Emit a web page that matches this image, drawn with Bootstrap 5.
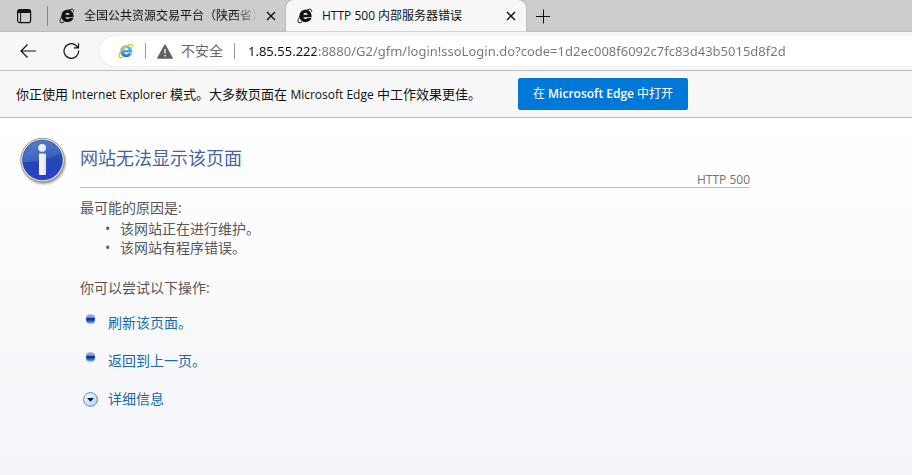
<!DOCTYPE html>
<html lang="zh-CN">
<head>
<meta charset="utf-8">
<meta name="viewport" content="width=device-width, initial-scale=1">
<title>HTTP 500 内部服务器错误</title>
<link href="https://cdn.jsdelivr.net/npm/bootstrap@5.3.0/dist/css/bootstrap.min.css" rel="stylesheet">
<style>
body { font-family: "Open Sans", "Noto Sans CJK SC", sans-serif; font-size: 14px; line-height: 20px; color: #575757; background: #fff; }
svg { display: block; flex: none; }
.icon-btn { border: 0; padding: 0; background: none; color: #111; }
.tab-strip { height: 32px; background: #cdcdcd; border-bottom: 1px solid #bcbcbc; font-size: 12px; line-height: 18px; color: #111; }
.strip-tool { padding: 0 15px 0 16px; }
.strip-line { width: 1px; height: 20px; background: #858585; }
.browser-tab { width: 238px; height: 32px; padding: 0 10px 0 11px; }
.browser-tab.current { width: 240px; background: #f7f7f7; border-radius: 8px 8px 0 0; box-shadow: 0 0 2px #999; clip-path: inset(0 -3px 0 -3px); }
.tab-title { flex: 1 1 0; min-width: 0; color: inherit; text-decoration: none; overflow: hidden; white-space: nowrap; margin-left: 9px; }
.tab-title.faded { -webkit-mask-image: linear-gradient(to left, transparent, #000 24px); mask-image: linear-gradient(to left, transparent, #000 24px); margin-right: 8px; }
.toolbar { height: 38px; background: #f7f7f7; padding-left: 20px; }
.reload { margin-left: 26px; }
.address { height: 30px; margin-left: 20px; padding-left: 18px; background: #fff; border-radius: 15px 0 0 15px; box-shadow: 0 0 3px #e2e2e2; }
.sep { width: 1px; height: 16px; margin: 0 11px; background: #999; }
.insecure { color: #666; gap: 8px; }
.url { border: 0; outline: 0; padding: 0; margin-left: 2px; font-family: "Noto Sans", sans-serif; font-size: 13px; height: 24px; color: #767676; -webkit-text-fill-color: transparent; background: linear-gradient(to right, #111 68px, #767676 68px); -webkit-background-clip: text; background-clip: text; }
.notice { height: 48px; background: #f7f7f7; border-top: 1px solid #bdbdbd; border-bottom: 1px solid #bdbdbd; padding-left: 16px; font-size: 13px; color: #111; }
.notice-text { flex: 0 0 502px; }
.latin { font-size: 12px; }
.edge-btn { --bs-btn-bg: #0078d7; --bs-btn-border-color: #0078d7; --bs-btn-font-size: 12px; --bs-btn-line-height: 18px; --bs-btn-border-radius: 2px; width: 170px; height: 32px; padding: 0; }
.error-page { flex: 1 1 auto; padding: 19px 20px 20px 18px; background: linear-gradient(#fff, #f4f5f9); }
.error-body { flex: 0 1 670px; margin-left: 12px; }
.error-head { border-bottom: 1px solid #b6bccc; }
.error-title { font-size: 18px; line-height: 26px; color: #4465a2; padding: 8px 0 2px; }
.error-code { font-size: 12px; line-height: 14px; color: #737373; text-align: right; }
.cause { padding-top: 10px; }
.reasons { padding-left: 25px; line-height: 19px; margin: 1px 0 21px; }
.reasons li::before { content: "•"; display: inline-block; width: 15px; }
.hint { margin-bottom: 15px; }
.action { color: #136ba9; text-decoration: none; font-size: 14px; line-height: 20px; gap: 10px; }
.actions { gap: 18px; padding-left: 3px; }
</style>
</head>
<body class="d-flex flex-column min-vh-100">
<svg width="0" height="0" class="position-absolute" aria-hidden="true">
  <defs>
    <symbol id="ie" viewBox="0 0 16 16">
      <path d="M8.600 1.800c3.500 0 6 2.500 6 6.300v1.100H6.400c.2 1.100 1 1.700 2.200 1.700.9 0 1.500-.3 1.900-.9h3.900c-.8 2.500-3 4.100-5.800 4.100-3.700 0-6.200-2.500-6.200-6.100s2.500-6.200 6.200-6.200zM6.400 6.700h4.200c-.1-1.200-.9-1.900-2.100-1.900s-2 .7-2.100 1.900z" fill="currentColor" fill-rule="evenodd"/>
      <path d="M14.500 3.800C15 2.200 14.500 1.300 13.200 1.200 10.800 1.100 6 4.200 3.300 8 .9 11.200.3 14.200 2 14.700c.8.2 1.900-.1 3.100-.8" fill="none" stroke="currentColor" stroke-width="1"/>
    </symbol>
    <symbol id="cross" viewBox="0 0 10 10"><path d="M1 1l8 8M9 1L1 9" stroke="currentColor" stroke-width="1.400"/></symbol>
    <linearGradient id="ieBlue" x1="0" y1="0" x2="0" y2="1"><stop stop-color="#6fd0f5"/><stop offset="1" stop-color="#1778c4"/></linearGradient>
    <linearGradient id="infoBlue" x1="0" y1="0" x2="0" y2="1"><stop stop-color="#3561bd"/><stop offset=".55" stop-color="#2347b4"/><stop offset="1" stop-color="#2a40c8"/></linearGradient>
    <linearGradient id="gloss" x1="0" y1="0" x2="1" y2="1"><stop stop-color="#7396d8" stop-opacity=".6"/><stop offset="1" stop-color="#5e82d4" stop-opacity=".25"/></linearGradient>
    <linearGradient id="stem" x1="0" y1="0" x2="1" y2="0"><stop stop-color="#fff"/><stop offset="1" stop-color="#dde1ee"/></linearGradient>
    <linearGradient id="bead" x1="0" y1="0" x2="0" y2="1"><stop stop-color="#a8b2dc"/><stop offset=".38" stop-color="#7286cb"/><stop offset=".45" stop-color="#0a2197"/><stop offset=".62" stop-color="#1740b8"/><stop offset="1" stop-color="#55c4f5"/></linearGradient>
    <linearGradient id="pane" x1="0" y1="0" x2="1" y2="1"><stop stop-color="#fff"/><stop offset="1" stop-color="#9fd0f0"/></linearGradient>
    <filter id="soft" x="-20%" y="-20%" width="140%" height="140%"><feGaussianBlur stdDeviation="1"/></filter>
    <symbol id="beadIcon" viewBox="0 0 15 10"><rect x="3" y=".5" width="9" height="9" rx="3.600" fill="url(#bead)" stroke="#a6b0d4" stroke-width=".6"/></symbol>
  </defs>
</svg>

<header>
  <div class="tab-strip d-flex align-items-center">
    <button class="icon-btn strip-tool" aria-label="标签页操作">
      <svg width="16" height="16" viewBox="0 0 16 16"><rect x="1.600" y="1.600" width="13" height="13" rx="2.200" fill="none" stroke="currentColor" stroke-width="1.200"/><path d="M1.500 5V3.500a2 2 0 0 1 2-2h9.200a2 2 0 0 1 2 2V5z" fill="currentColor"/><path d="M4.600 5v9.500" stroke="currentColor" stroke-width="1"/></svg>
    </button>
    <span class="strip-line"></span>
    <div class="browser-tab d-flex align-items-center">
      <svg width="16" height="16"><use href="#ie"/></svg>
      <a class="tab-title faded" href="#">全国公共资源交易平台（陕西省）</a>
      <button class="icon-btn" aria-label="关闭标签页"><svg width="10" height="10"><use href="#cross"/></svg></button>
    </div>
    <div class="browser-tab current d-flex align-items-center">
      <svg width="16" height="16"><use href="#ie"/></svg>
      <a class="tab-title" href="#" aria-current="page">HTTP 500 内部服务器错误</a>
      <button class="icon-btn" aria-label="关闭标签页"><svg width="10" height="10"><use href="#cross"/></svg></button>
    </div>
    <button class="icon-btn ms-2" aria-label="新建标签页"><svg width="18" height="16" viewBox="0 0 18 16"><path d="M2 8.500h14M9.500 1.500v14" stroke="currentColor" stroke-width="1"/></svg></button>
  </div>

  <div class="toolbar d-flex align-items-center">
    <button class="icon-btn" aria-label="后退"><svg width="17" height="16" viewBox="0 0 17 16"><path d="M16 8H1M7.500 1.500L1 8l6.500 6.500" fill="none" stroke="currentColor" stroke-width="1.200"/></svg></button>
    <button class="icon-btn reload" aria-label="刷新"><svg width="17" height="18" viewBox="0 0 17 18"><path d="M15.600 8.500A7.300 7.300 0 1 1 13.300 3.700L15.300 5.600M15.500 1.200v4.600h-4.600" fill="none" stroke="currentColor" stroke-width="1.200"/></svg></button>
    <div class="address d-flex align-items-center flex-grow-1">
      <svg width="16" height="16" viewBox="0 0 16 16"><path d="M8.300 2.200c3.500 0 5.900 2.400 5.900 6.200v1H6.200c.2 1.200 1 1.900 2.200 1.900.9 0 1.600-.4 2-1.100h3.500c-.8 2.400-2.900 3.900-5.600 3.900-3.500 0-6-2.400-6-5.900s2.500-6 6-6zM6.200 6.900h4.200c-.1-1.200-.9-1.900-2.100-1.900s-2 .7-2.100 1.900z" fill="url(#ieBlue)" fill-rule="evenodd"/><path d="M14.300 4.400C15 2.500 14.600 1.400 13.200 1.300 10.800 1.100 6 4.200 3.300 8 .9 11.200.3 14.200 2 14.700c.8.2 1.900-.1 3.100-.8" fill="none" stroke="#f4bd2c" stroke-width="1.300"/></svg>
      <span class="sep"></span>
      <button class="icon-btn insecure d-flex align-items-center">
        <svg width="16" height="15" viewBox="0 0 16 15"><path d="M8 1.200L15.200 14H.8z" fill="#616161" stroke="#616161" stroke-width="1.400" stroke-linejoin="round"/><path d="M8 5v4.500M8 11v1.500" stroke="#fff" stroke-width="1.300"/></svg>
        <span>不安全</span>
      </button>
      <span class="sep"></span>
      <input class="url flex-grow-1" type="text" aria-label="地址" value="1.85.55.222:8880/G2/gfm/login!ssoLogin.do?code=1d2ec008f6092c7fc83d43b5015d8f2d">
    </div>
  </div>

  <div class="notice d-flex align-items-center">
    <span class="notice-text text-nowrap">你正使用 <span class="latin">Internet Explorer</span> 模式。大多数页面在 <span class="latin">Microsoft Edge</span> 中工作效果更佳。</span>
    <button class="btn btn-primary edge-btn">在 <span class="fw-semibold">Microsoft Edge</span> 中打开</button>
  </div>
</header>

<main class="error-page d-flex align-items-start">
  <svg width="50" height="50" viewBox="0 0 50 50" aria-hidden="true">
    <circle cx="25.500" cy="25" r="22" fill="#555" opacity=".6" filter="url(#soft)"/>
    <circle cx="24.500" cy="23" r="21.800" fill="#f1f1f1" stroke="#8b8b8b" stroke-width=".9"/>
    <circle cx="24.500" cy="23" r="20" fill="url(#infoBlue)" stroke="#27408d" stroke-width=".6"/>
    <path d="M4.700 25A20 20 0 0 1 43.300 16.500C35 18 29 25 4.700 25z" fill="url(#gloss)"/>
    <circle cx="24.200" cy="10.800" r="3.900" fill="url(#stem)"/>
    <rect x="21" y="16.500" width="7" height="21.500" rx="1" fill="url(#stem)"/>
  </svg>
  <div class="error-body">
    <div class="error-head">
      <h1 class="error-title m-0 fw-normal">网站无法显示该页面</h1>
      <div class="error-code">HTTP 500</div>
    </div>
    <p class="cause mb-0">最可能的原因是:</p>
    <ul class="reasons list-unstyled">
      <li>该网站正在进行维护。</li>
      <li>该网站有程序错误。</li>
    </ul>
    <p class="hint">你可以尝试以下操作:</p>
    <div class="actions d-flex flex-column align-items-start">
      <a class="action d-flex align-items-center" href="#"><svg class="mb-2" width="15" height="10"><use href="#beadIcon"/></svg>刷新该页面。</a>
      <a class="action d-flex align-items-center" href="#"><svg class="mb-2" width="15" height="10"><use href="#beadIcon"/></svg>返回到上一页。</a>
      <button class="action icon-btn d-flex align-items-center"><svg width="15" height="15" viewBox="0 0 15 15"><circle cx="7.500" cy="7.500" r="6.900" fill="url(#pane)" stroke="#6684b4" stroke-width="1"/><path d="M4 6h7L7.500 9.800z" fill="#06145e"/></svg>详细信息</button>
    </div>
  </div>
</main>
<script src="https://cdn.jsdelivr.net/npm/bootstrap@5.3.0/dist/js/bootstrap.bundle.min.js"></script>
</body>
</html>
